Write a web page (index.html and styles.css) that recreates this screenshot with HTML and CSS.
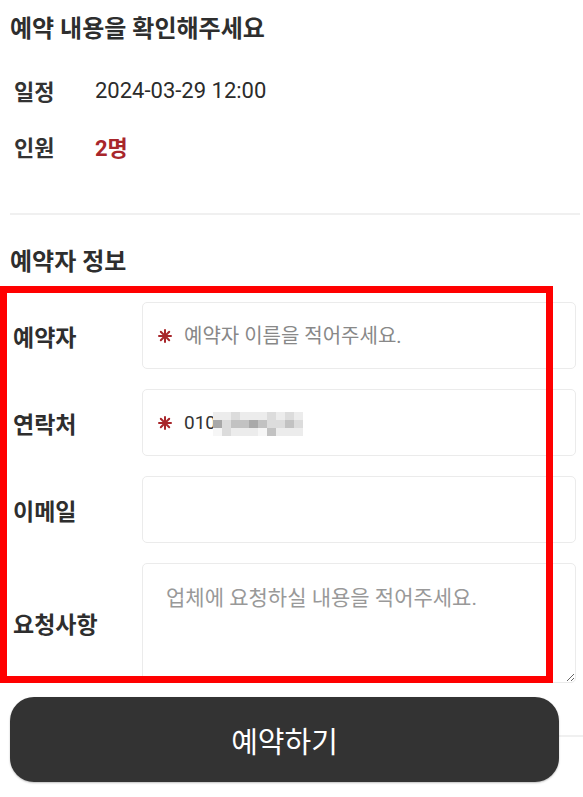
FILE: index.html
```html
<!DOCTYPE html>
<html lang="ko">
<head>
  <meta charset="UTF-8">
  <meta name="viewport" content="width=device-width, initial-scale=1.0">
  <title>예약 확인</title>
  <link rel="stylesheet" href="styles.css">
</head>
<body>
  <div class="page">
    <!-- 예약 내용 -->
    <section class="summary">
      <h2 class="section-title">예약 내용을 확인해주세요</h2>
      <div class="summary-row">
        <span class="summary-label">일정</span>
        <span class="summary-value">2024-03-29 12:00</span>
      </div>
      <div class="summary-row">
        <span class="summary-label">인원</span>
        <span class="summary-value people">2명</span>
      </div>
    </section>

    <hr class="divider">

    <!-- 예약자 정보 -->
    <section class="booker">
      <h2 class="section-title">예약자 정보</h2>
      <div class="form">
        <label class="form-label" for="name">예약자</label>
        <div class="field">
          <svg class="required" viewBox="0 0 14 14" width="14" height="14">
            <g stroke="#a8262b" stroke-width="2" stroke-linecap="round">
              <line x1="7" y1="1" x2="7" y2="13"/>
              <line x1="1" y1="7" x2="13" y2="7"/>
              <line x1="2.8" y1="2.8" x2="11.2" y2="11.2"/>
              <line x1="11.2" y1="2.8" x2="2.8" y2="11.2"/>
            </g>
          </svg>
          <input id="name" type="text" placeholder="예약자 이름을 적어주세요.">
        </div>

        <label class="form-label" for="phone">연락처</label>
        <div class="field">
          <svg class="required" viewBox="0 0 14 14" width="14" height="14">
            <g stroke="#a8262b" stroke-width="2" stroke-linecap="round">
              <line x1="7" y1="1" x2="7" y2="13"/>
              <line x1="1" y1="7" x2="13" y2="7"/>
              <line x1="2.8" y1="2.8" x2="11.2" y2="11.2"/>
              <line x1="11.2" y1="2.8" x2="2.8" y2="11.2"/>
            </g>
          </svg>
          <span class="phone" id="phone">010</span>
          <span class="mosaic">
            <i class="p1"></i><i class="p1"></i><i class="p2"></i><i class="p1"></i><i class="p1"></i><i class="p1"></i><i class="p2"></i><i class="p1"></i><i class="p2"></i><i class="p1"></i>
            <i class="p4"></i><i class="p2"></i><i class="p3"></i><i class="p3"></i><i class="p4"></i><i class="p3"></i><i class="p2"></i><i class="p2"></i><i class="p3"></i><i class="p2"></i>
            <i class="p0"></i><i class="p2"></i><i class="p1"></i><i class="p1"></i><i class="p1"></i><i class="p0"></i><i class="p3"></i><i class="p1"></i><i class="p1"></i><i class="p1"></i>
          </span>
        </div>

        <label class="form-label" for="email">이메일</label>
        <div class="field">
          <input id="email" type="email">
        </div>

        <label class="form-label" for="memo">요청사항</label>
        <textarea class="memo" id="memo" placeholder="업체에 요청하실 내용을 적어주세요."></textarea>
      </div>
    </section>

    <!-- 하단 버튼 -->
    <div class="action">
      <button class="submit">예약하기</button>
    </div>
  </div>

  <!-- 강조 표시 -->
  <div class="highlight"></div>
</body>
</html>
```

FILE: styles.css
```css
/* Global Styles */
* {
  margin: 0;
  padding: 0;
  box-sizing: border-box;
}

body {
  font-family: Roboto, "Noto Sans CJK KR", sans-serif;
  color: #333;
  background: #fff;
  width: 583px;
  height: 797px;
  overflow: hidden;
  position: relative;
}

.page {
  padding: 0 7px 0 10px;
}

.section-title {
  font-size: 24px;
  font-weight: 700;
  line-height: 30px;
  color: #2e2e2e;
}

/* Summary */
.summary {
  padding-top: 14px;
}

.summary .section-title {
  margin-bottom: 31px;
}

.summary-row {
  display: flex;
  align-items: center;
  height: 30px;
  padding-left: 4px;
  margin-bottom: 26px;
}

.summary-row:last-child {
  margin-bottom: 0;
}

.summary-label {
  width: 81px;
  font-size: 22px;
  font-weight: 700;
}

.summary-value {
  font-size: 22px;
  color: #2b2b2b;
}

.summary-value.people {
  font-weight: 700;
  color: #a8262b;
}

.divider {
  border: none;
  border-top: 2px solid #f0f0f0;
  margin: 52px -4px 0 0;
}

/* Booker form */
.booker {
  padding-top: 32px;
}

.booker .section-title {
  margin-bottom: 25px;
}

.form {
  display: grid;
  grid-template-columns: 132px 1fr;
  grid-template-rows: 67px 67px 67px 120px;
  row-gap: 20px;
}

.form-label {
  display: flex;
  align-items: center;
  padding-left: 3px;
  font-size: 23px;
  font-weight: 700;
  color: #2e2e2e;
}

.field {
  display: flex;
  align-items: center;
  border: 1px solid #ebebeb;
  border-radius: 5px;
  padding-left: 15px;
}

.field .required {
  flex-shrink: 0;
  margin-right: 12px;
}

.field input {
  flex: 1;
  min-width: 0;
  border: none;
  outline: none;
  font-family: inherit;
  font-size: 20px;
  color: #333;
  background: transparent;
}

.field input::placeholder {
  color: #888;
}

.phone {
  font-size: 19px;
  color: #333;
}

.mosaic {
  display: grid;
  grid-template-columns: repeat(10, 9px);
  grid-template-rows: repeat(3, 8px);
  margin: 3px 0 0 -3px;
}

.mosaic i { display: block; }
.mosaic .p0 { background: #f6f6f6; }
.mosaic .p1 { background: #ececec; }
.mosaic .p2 { background: #dcdcdc; }
.mosaic .p3 { background: #c2c2c2; }
.mosaic .p4 { background: #a9a9a9; }

.memo {
  height: 120px;
  border: 1px solid #ebebeb;
  border-radius: 5px;
  padding: 17px 23px;
  font-family: inherit;
  font-size: 21px;
  color: #333;
  outline: none;
}

.memo::placeholder {
  color: #999;
}

/* Action */
.action {
  position: relative;
  margin-top: 14px;
}

.action::before {
  content: "";
  position: absolute;
  left: 540px;
  right: -7px;
  top: 38px;
  border-top: 2px solid #f0f0f0;
}

.submit {
  position: relative;
  width: 549px;
  height: 85px;
  border: none;
  border-radius: 24px;
  background: #333;
  color: #fff;
  font-family: inherit;
  font-size: 29px;
  box-shadow: 0 1px 2px rgba(0, 0, 0, 0.25);
}

/* Red annotation box */
.highlight {
  position: absolute;
  left: 0;
  top: 286px;
  width: 553px;
  height: 397px;
  border: 7px solid #ff0000;
  pointer-events: none;
}
```
